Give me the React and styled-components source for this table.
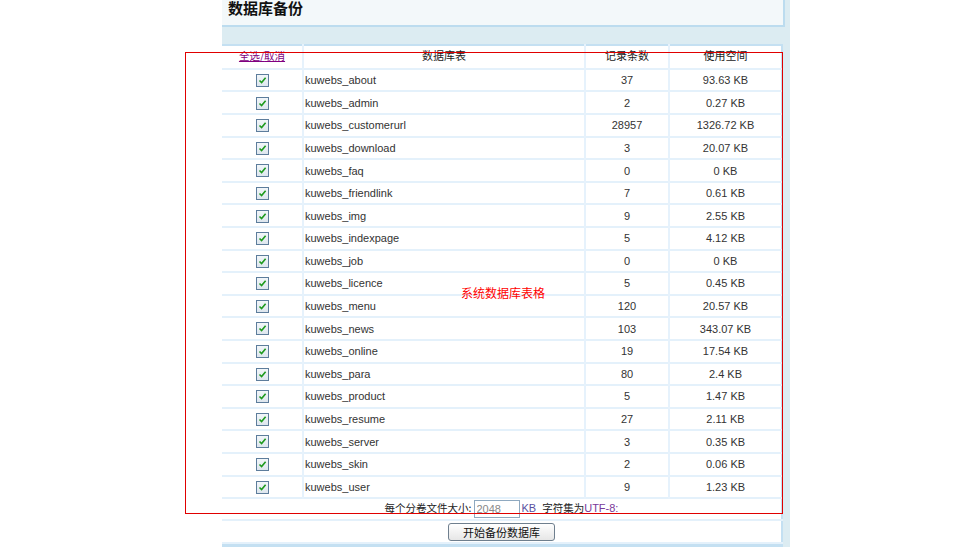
import React from 'react';
import styled, { createGlobalStyle } from 'styled-components';

const GlobalStyle = createGlobalStyle`
  html, body { margin: 0; padding: 0; background: #ffffff; }
  body {
    font-family: "Liberation Sans", Arial, "Noto Sans CJK SC", sans-serif;
    font-size: 12px;
    color: #333;
  }
`;

const tables = [
  ['kuwebs_about', '37', '93.63 KB'],
  ['kuwebs_admin', '2', '0.27 KB'],
  ['kuwebs_customerurl', '28957', '1326.72 KB'],
  ['kuwebs_download', '3', '20.07 KB'],
  ['kuwebs_faq', '0', '0 KB'],
  ['kuwebs_friendlink', '7', '0.61 KB'],
  ['kuwebs_img', '9', '2.55 KB'],
  ['kuwebs_indexpage', '5', '4.12 KB'],
  ['kuwebs_job', '0', '0 KB'],
  ['kuwebs_licence', '5', '0.45 KB'],
  ['kuwebs_menu', '120', '20.57 KB'],
  ['kuwebs_news', '103', '343.07 KB'],
  ['kuwebs_online', '19', '17.54 KB'],
  ['kuwebs_para', '80', '2.4 KB'],
  ['kuwebs_product', '5', '1.47 KB'],
  ['kuwebs_resume', '27', '2.11 KB'],
  ['kuwebs_server', '3', '0.35 KB'],
  ['kuwebs_skin', '2', '0.06 KB'],
  ['kuwebs_user', '9', '1.23 KB'],
];

// ページ全体
const Page = styled.div`
  position: relative;
  display: flex;
  height: 547px;
  overflow: hidden;
`;

const LeftSpace = styled.div`
  width: 222px;
  flex-shrink: 0;
`;

const Main = styled.div`
  width: 568px;
  background: #dcecf2;
  display: flex;
  flex-direction: column;
`;

const TitleBar = styled.div`
  width: 555px;
  height: 26px;
  background: #f3f8fa;
  border-right: 2px solid #bcdcef;
  border-bottom: 2px solid #bcdcef;
  padding-left: 6px;
`;

const Title = styled.h1`
  margin: 0;
  font-family: "Noto Sans CJK SC", sans-serif;
  font-size: 15px;
  font-weight: bold;
  line-height: 16px;
  color: #111;
`;

const Grid = styled.table`
  margin-top: 17px;
  width: 561px;
  border-collapse: collapse;
  background: #fff;
  border-top: 2px solid #c4e0f2;
  border-right: 2px solid #c4e0f2;
  table-layout: fixed;
`;

const Row = styled.tr`
  height: ${p => p.$h || 22.6}px;
  border-bottom: 2px solid #e4f1fb;
`;

const Cell = styled.td`
  padding: 0;
  text-align: ${p => p.$align || 'center'};
  border-left: ${p => (p.$first ? 'none' : '2px solid #e6f2fc')};
  padding-left: ${p => (p.$align === 'left' ? '1px' : '0')};
  white-space: nowrap;
  color: #333;
  font-size: 11px;
  vertical-align: middle;
`;

const HeadCell = styled(Cell)`
  font-family: "Noto Sans CJK SC", sans-serif;
  font-size: 11px;
  color: #222;
  vertical-align: top;
  padding-top: 1px;
`;

const SelectLink = styled.a`
  color: #800080;
  text-decoration: underline;
  font-size: 10.5px;
  font-family: "Noto Sans CJK SC", sans-serif;
`;

const CheckBox = styled.span`
  display: inline-block;
  width: 11px;
  height: 11px;
  border: 1px solid #5d7d9c;
  background: linear-gradient(#f2f6f9, #dde6ee);
  vertical-align: middle;
  position: relative;
  svg { position: absolute; left: 1px; top: 1px; }
`;

const Check = () => (
  <CheckBox>
    <svg width="9" height="9" viewBox="0 0 9 9">
      <path d="M1.5 4.5 L3.6 6.6 L7.6 1.8" fill="none" stroke="#1d9a1d" strokeWidth="1.6" />
    </svg>
  </CheckBox>
);

const FooterCell = styled.td`
  text-align: center;
  font-family: "Noto Sans CJK SC", sans-serif;
  font-size: 10.5px;
  color: #222;
  padding: 0;
`;

const SizeInput = styled.input`
  width: 40px;
  height: 16px;
  border: 1px solid #8fa9c0;
  padding: 0 2px;
  font-family: "Liberation Sans", Arial, sans-serif;
  font-size: 11px;
  color: #888;
  margin: 0 2px;
  vertical-align: middle;
`;

const Unit = styled.span`
  color: #5a4fa0;
  font-family: "Liberation Sans", Arial, sans-serif;
  font-size: 11px;
  margin-right: 6px;
`;

const Charset = styled.span`
  color: #7a3a9a;
  font-family: "Liberation Sans", Arial, sans-serif;
  font-size: 11px;
`;

const StartButton = styled.button`
  width: 107px;
  height: 18px;
  border: 1px solid #6f7f8e;
  border-radius: 3px;
  background: linear-gradient(#ffffff, #e6e6e6);
  font-family: "Noto Sans CJK SC", sans-serif;
  font-size: 11px;
  color: #111;
  padding: 0;
  line-height: 14px;
`;

const BottomBar = styled.div`
  width: 561px;
  height: 3px;
  background: #c4e0f2;
`;

// 注釈の赤枠
const Annotation = styled.div`
  position: absolute;
  left: 185px;
  top: 52px;
  width: 596px;
  height: 460px;
  border: 1px solid #e00000;
  pointer-events: none;
`;

const AnnotationLabel = styled.span`
  position: absolute;
  left: 275px;
  top: 231px;
  color: #f00;
  font-family: "Noto Sans CJK SC", sans-serif;
  font-size: 12px;
`;

export default function App() {
  return (
    <>
      <GlobalStyle />
      <Page>
        <LeftSpace />
        <Main>
          <TitleBar>
            <Title>数据库备份</Title>
          </TitleBar>
          <Grid>
            <colgroup>
              <col style={{ width: 81 }} />
              <col style={{ width: 282 }} />
              <col style={{ width: 84 }} />
              <col />
            </colgroup>
            <tbody>
              <Row $h={24}>
                <HeadCell $first>
                  <SelectLink href="#">全选</SelectLink>
                  <SelectLink href="#">/</SelectLink>
                  <SelectLink href="#">取消</SelectLink>
                </HeadCell>
                <HeadCell>数据库表</HeadCell>
                <HeadCell>记录条数</HeadCell>
                <HeadCell>使用空间</HeadCell>
              </Row>
              {tables.map(([name, count, size]) => (
                <Row key={name}>
                  <Cell $first><Check /></Cell>
                  <Cell $align="left">{name}</Cell>
                  <Cell>{count}</Cell>
                  <Cell>{size}</Cell>
                </Row>
              ))}
              <Row $h={22}>
                <FooterCell colSpan={4}>
                  每个分卷文件大小:
                  <SizeInput defaultValue="2048" />
                  <Unit>KB</Unit>
                  字符集为<Charset>UTF-8:</Charset>
                </FooterCell>
              </Row>
              <Row $h={23}>
                <FooterCell colSpan={4}>
                  <StartButton>开始备份数据库</StartButton>
                </FooterCell>
              </Row>
            </tbody>
          </Grid>
          <BottomBar />
        </Main>
        <Annotation>
          <AnnotationLabel>系统数据库表格</AnnotationLabel>
        </Annotation>
      </Page>
    </>
  );
}
